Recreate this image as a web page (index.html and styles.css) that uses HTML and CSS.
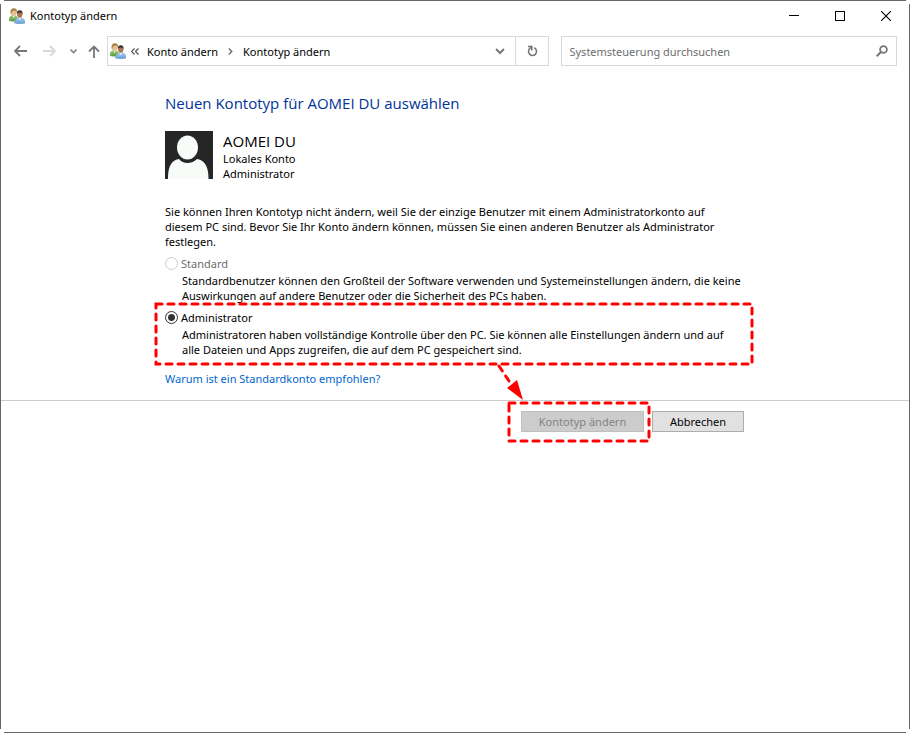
FILE: index.html
```html
<!DOCTYPE html>
<html lang="de">
<head>
  <meta charset="UTF-8" />
  <meta name="viewport" content="width=device-width, initial-scale=1.0"/>
  <title>Kontotyp ändern</title>
  <link rel="stylesheet" href="styles.css">
</head>
<body>
  <svg class="sprite" aria-hidden="true">
    <defs>
      <linearGradient id="green" x1="0" y1="0" x2="0" y2="1">
        <stop offset="0" stop-color="#a9cf7c"/>
        <stop offset="1" stop-color="#4d9a34"/>
      </linearGradient>
      <linearGradient id="blue" x1="0" y1="0" x2="0" y2="1">
        <stop offset="0" stop-color="#b4d3f2"/>
        <stop offset="1" stop-color="#5b9ad8"/>
      </linearGradient>
    </defs>
    <symbol id="users" viewBox="0 0 16 16">
      <path d="M0 12.500C0 9 1.500 7.500 4.500 7.500S8.500 9 8.500 12.500C6 13.600 2 13.600 0 12.500Z" fill="url(#green)" stroke="#5d8f45" stroke-width=".4"/>
      <path d="M3.800 7.500h2l-1 2.500z" fill="#fff"/>
      <ellipse cx="4.800" cy="4.500" rx="2.600" ry="3.200" fill="#e6bf90"/>
      <path d="M1.700 5.500C1 1.800 2.800.200 4.800.200S8.500 1.500 8 4.800C7.300 3.600 7 2.800 5.500 2.500 3.500 2.800 2.600 3.500 2.300 7Z" fill="#a88346"/>
      <path d="M5.500 15C5.500 11.500 7.300 9.800 10.800 9.800S16 11.500 16 15C13.500 16.100 8 16.100 5.500 15Z" fill="url(#blue)" stroke="#5588bf" stroke-width=".4"/>
      <path d="M9.500 9.800h2.400l-1.200 2.400z" fill="#fff"/>
      <ellipse cx="10.700" cy="6.600" rx="2.600" ry="3.200" fill="#a9764b"/>
      <path d="M7.900 6.500C7.500 3.500 8.800 2.200 10.800 2.200S14 3.500 13.500 6.800C13 5.400 12.600 4.700 11 4.600 9.200 4.700 8.500 5.200 7.900 6.500Z" fill="#3c3029"/>
    </symbol>
  </svg>

  <div class="window">
    <header class="titlebar">
      <svg class="app-icon"><use href="#users"/></svg>
      <span class="title">Kontotyp ändern</span>
      <div class="window-buttons">
        <button type="button" aria-label="Minimieren">
          <svg width="10" height="10"><path d="M0 4.500H10" stroke="#000"/></svg>
        </button>
        <button type="button" aria-label="Maximieren">
          <svg width="10" height="10"><rect x=".5" y=".5" width="9" height="9" fill="none" stroke="#000"/></svg>
        </button>
        <button type="button" aria-label="Schließen">
          <svg width="10" height="10"><path d="M0 0L10 10M10 0L0 10" stroke="#000" stroke-width="1.100"/></svg>
        </button>
      </div>
    </header>

    <nav class="toolbar">
      <div class="history">
        <button type="button" class="back" aria-label="Zurück">
          <svg width="13" height="12"><path d="M13 6H1.500M6 1L1 6l5 5" fill="none" stroke="#777" stroke-width="1.800"/></svg>
        </button>
        <button type="button" class="forward" aria-label="Vorwärts">
          <svg width="13" height="12"><path d="M0 6h11.500M7 1l5 5-5 5" fill="none" stroke="#d9d9d9" stroke-width="1.800"/></svg>
        </button>
        <button type="button" class="recent" aria-label="Verlauf">
          <svg width="7" height="5"><path d="M.5.500l3 3 3-3" fill="none" stroke="#888" stroke-width="1.600"/></svg>
        </button>
        <button type="button" class="up" aria-label="Nach oben">
          <svg width="12" height="13"><path d="M6 13V1.500M1 6.500l5-5 5 5" fill="none" stroke="#777" stroke-width="1.800"/></svg>
        </button>
      </div>

      <div class="address">
        <svg class="app-icon"><use href="#users"/></svg>
        <svg class="chevrons" width="8" height="7"><path d="M3.500.500l-3 3 3 3M7.500.500l-3 3 3 3" fill="none" stroke="#555" stroke-width="1.200"/></svg>
        <a href="#">Konto ändern</a>
        <svg class="chevron" width="5" height="7"><path d="M.8.500l3 3-3 3" fill="none" stroke="#6d6d6d" stroke-width="1.400"/></svg>
        <a href="#">Kontotyp ändern</a>
        <button type="button" class="dropdown" aria-label="Vorherige Orte">
          <svg width="10" height="7"><path d="M1 1l4 4 4-4" fill="none" stroke="#777" stroke-width="2"/></svg>
        </button>
        <button type="button" class="refresh" aria-label="Aktualisieren">
          <svg width="11" height="12"><path d="M7.200 2.800A4 4 0 1 1 3.200 3.200L4.600 2M1 1.500H4.800V5.500" fill="none" stroke="#777" stroke-width="1.600"/></svg>
        </button>
      </div>

      <div class="search">
        <input type="search" placeholder="Systemsteuerung durchsuchen" aria-label="Systemsteuerung durchsuchen">
        <svg width="12" height="12"><circle cx="7.500" cy="4.500" r="3.400" fill="none" stroke="#777" stroke-width="1.800"/><path d="M5 7L.700 11.300" stroke="#777" stroke-width="2"/></svg>
      </div>
    </nav>

    <form>
      <main class="content">
        <h1>Neuen Kontotyp für AOMEI DU auswählen</h1>

        <div class="account">
          <svg class="avatar" viewBox="0 0 48 48">
            <rect width="48" height="48" fill="#262626"/>
            <ellipse cx="22.500" cy="16.500" rx="10.500" ry="12" fill="#f7fcf9"/>
            <path d="M3 48C3 38 5 29 14 28Q17 32 22.500 32T32 28C41 29 43.500 38 43.500 48Z" fill="#f7fcf9"/>
          </svg>
          <div>
            <h2>AOMEI DU</h2>
            <p>Lokales Konto</p>
            <p>Administrator</p>
          </div>
        </div>

        <p class="notice">Sie können Ihren Kontotyp nicht ändern, weil Sie der einzige Benutzer mit einem Administratorkonto auf<br>diesem PC sind. Bevor Sie Ihr Konto ändern können, müssen Sie einen anderen Benutzer als Administrator<br>festlegen.</p>

        <div class="option">
          <input type="radio" name="type" id="standard" disabled>
          <label for="standard">Standard</label>
          <p>Standardbenutzer können den Großteil der Software verwenden und Systemeinstellungen ändern, die keine<br>Auswirkungen auf andere Benutzer oder die Sicherheit des PCs haben.</p>
        </div>

        <div class="option">
          <input type="radio" name="type" id="admin" checked>
          <label for="admin">Administrator</label>
          <p>Administratoren haben vollständige Kontrolle über den PC. Sie können alle Einstellungen ändern und auf<br>alle Dateien und Apps zugreifen, die auf dem PC gespeichert sind.</p>
          <svg class="mark mark-option"><rect width="100%" height="100%"/></svg>
        </div>

        <a class="help" href="#">Warum ist ein Standardkonto empfohlen?</a>
      </main>

      <footer>
        <div class="actions">
          <div class="submit">
            <button type="submit" disabled>Kontotyp ändern</button>
            <svg class="mark mark-submit"><rect width="100%" height="100%"/></svg>
            <svg class="arrow" width="28" height="38"><path class="shaft" d="M3 3L15 21"/><path d="M27 37L11 25 21 17Z" fill="#f00"/></svg>
          </div>
          <button type="button">Abbrechen</button>
        </div>
      </footer>
    </form>
  </div>
</body>
</html>
```

FILE: styles.css
```css
* {
  margin: 0;
  padding: 0;
  box-sizing: border-box;
}

body {
  background: #fff;
  color: #000;
  font-family: "Noto Sans", "Open Sans", sans-serif;
  font-size: 11px;
  line-height: 15px;
}

button, input {
  font: inherit;
  color: inherit;
}

button {
  border: none;
  background: none;
}

svg {
  display: block;
  flex: none;
}

.sprite {
  position: absolute;
  width: 0;
  height: 0;
}

/* thin frame, left open at the corners */
.window {
  min-height: 100vh;
  padding: 1px;
  background:
    linear-gradient(#666, #666) center top / calc(100% - 8px) 1px no-repeat,
    linear-gradient(#666, #666) center bottom / calc(100% - 8px) 1px no-repeat,
    linear-gradient(#666, #666) left center / 1px calc(100% - 8px) no-repeat,
    linear-gradient(#666, #666) right center / 1px calc(100% - 8px) no-repeat;
}

.app-icon {
  width: 16px;
  height: 16px;
}

.titlebar {
  display: flex;
  align-items: center;
  height: 29px;
  padding-left: 8px;
}

.title {
  margin-left: 5px;
}

.window-buttons {
  display: flex;
  margin-left: auto;
}

.window-buttons button {
  display: flex;
  align-items: center;
  justify-content: center;
  width: 46px;
  height: 29px;
}

.toolbar {
  display: flex;
  align-items: center;
  gap: 12px;
  padding: 6px 12px 0 13px;
}

.history {
  display: flex;
  align-items: center;
  justify-content: space-between;
  width: 86px;
  margin-right: -5px;
}

.recent {
  margin: 0 -5px 0 -2px;
}

.address {
  display: flex;
  align-items: center;
  flex: 1;
  height: 30px;
  padding-left: 2px;
  border: 1px solid #d9d9d9;
}

.address a {
  color: #000;
  text-decoration: none;
  white-space: nowrap;
}

.chevrons {
  margin: 0 8px 0 5px;
}

.chevron {
  margin: 0 10px;
}

.dropdown {
  margin: 0 10px 0 auto;
}

.refresh {
  display: flex;
  align-items: center;
  justify-content: center;
  width: 33px;
  height: 28px;
  border-left: 1px solid #d9d9d9;
}

.search {
  display: flex;
  align-items: center;
  width: 38%;
  height: 30px;
  padding: 0 8px 0 7px;
  border: 1px solid #d9d9d9;
}

.search input {
  flex: 1;
  min-width: 0;
  border: none;
  outline: none;
  background: none;
  appearance: none;
}

.search input::placeholder {
  color: #6d6d6d;
  opacity: 1;
}

.content {
  max-width: 580px;
  margin: 0 auto;
  padding: 27px 0 14px;
}

h1, h2 {
  font-family: "Open Sans", "Noto Sans", sans-serif;
  font-size: 15px;
  font-weight: normal;
  line-height: 20px;
}

h1 {
  color: #003399;
}

.account {
  display: flex;
  gap: 10px;
  margin: 18px 0 23px;
}

.avatar {
  width: 48px;
  height: 48px;
}

.notice {
  margin-bottom: 7px;
  white-space: nowrap;
}

.option {
  position: relative;
  display: grid;
  grid-template-columns: 13px 1fr;
  align-items: center;
  column-gap: 3px;
  margin-bottom: 7px;
}

.option input {
  appearance: none;
  width: 13px;
  height: 13px;
  border: 1px solid #333;
  border-radius: 50%;
  background: #fff;
}

.option input:checked {
  background: radial-gradient(circle, #333 3px, #fff 4px);
}

.option input:disabled {
  border-color: #ccc;
}

.option input:disabled + label {
  color: #6d6d6d;
}

.option p {
  grid-column: 1 / 3;
  padding: 2px 0 0 17px;
  white-space: nowrap;
}

.help {
  display: inline-block;
  margin-top: 7px;
  color: #0066cc;
  text-decoration: none;
}

footer {
  border-top: 1px solid #ccc;
}

.actions {
  display: flex;
  justify-content: flex-end;
  gap: 8px;
  max-width: 580px;
  margin: 0 auto;
  padding: 10px 1px 0 0;
}

.actions button {
  width: 92px;
  height: 21px;
  border: 1px solid #adadad;
  background: #e1e1e1;
}

.submit {
  position: relative;
}

.actions .submit button {
  width: 123px;
  border-color: #bfbfbf;
  background: #ccc;
  color: #838383;
}

/* red highlights drawn over the page */
.mark, .arrow {
  position: absolute;
  overflow: visible;
  pointer-events: none;
}

.mark rect, .shaft {
  fill: none;
  stroke: #f00;
  stroke-width: 3px;
  stroke-dasharray: 6 6;
  stroke-linecap: round;
}

.mark-option {
  top: -6px;
  left: -9px;
  width: calc(100% + 16px);
  height: calc(100% + 13px);
}

.mark-submit {
  top: -8px;
  left: -12px;
  width: calc(100% + 17px);
  height: calc(100% + 17px);
}

.arrow {
  top: -48px;
  left: -25px;
}
```
